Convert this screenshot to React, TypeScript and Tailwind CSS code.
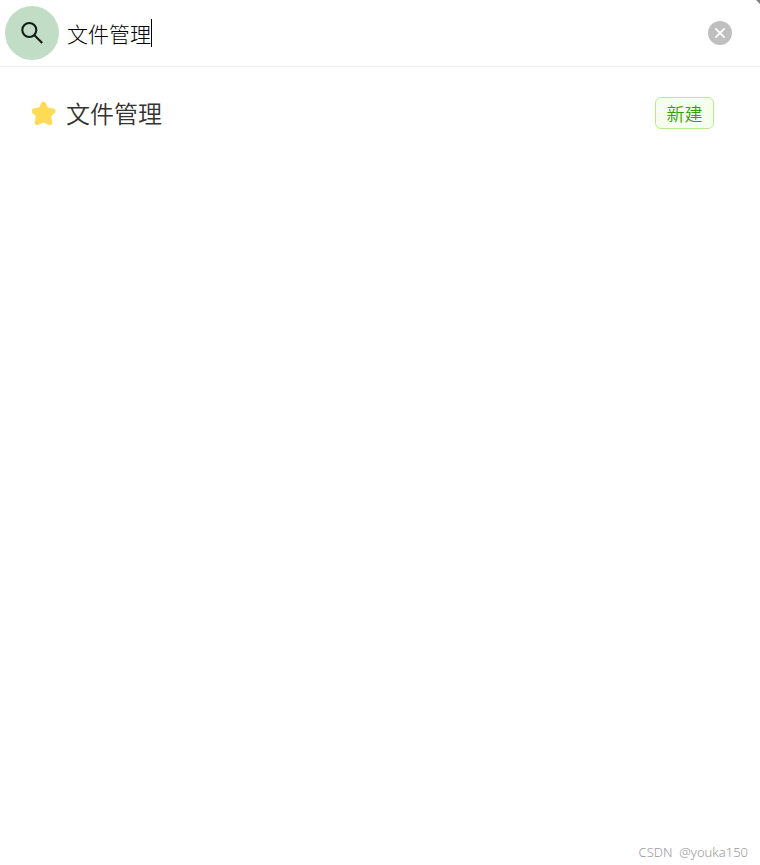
import { useState } from "react";

const sans = "font-['Noto_Sans_CJK_SC',sans-serif]";

function SearchIcon() {
  return (
    <svg viewBox="0 0 24 24" className="size-6" fill="none" stroke="#151c17" strokeWidth="2.1" aria-hidden="true">
      <circle cx="9.3" cy="9" r="7" />
      <path d="M14.2 13.9 22.2 21.9" />
    </svg>
  );
}

function StarIcon() {
  return (
    <svg viewBox="0 0 24 24" className="size-6 shrink-0" fill="#fddb55" stroke="#fddb55" strokeWidth="5" strokeLinejoin="round" aria-hidden="true">
      <path d="M11.5 3.2 14.2 8.8 21 10 16.6 14.6 17.8 21.6 11.5 18.8 5.2 21.6 6.4 14.6 2 10 8.8 8.8Z" />
    </svg>
  );
}

function ClearIcon() {
  return (
    <svg viewBox="0 0 24 24" className="size-6" aria-hidden="true">
      <circle cx="12" cy="12" r="12" fill="#bfbfbf" />
      <path d="M7.4 7.4 16.6 16.6M16.6 7.4 7.4 16.6" stroke="#fff" strokeWidth="1.9" />
    </svg>
  );
}

export default function App() {
  const [query, setQuery] = useState("文件管理");

  return (
    <div className={`relative flex min-h-screen flex-col bg-white text-[#333333] ${sans}`}>
      <header className="flex items-center border-b border-[#eeeeee] py-1.5 pr-7 pl-[5px]">
        <button type="button" aria-label="搜索" className="flex size-[54px] shrink-0 items-center justify-center rounded-full bg-[#c1ddc6]">
          <SearchIcon />
        </button>
        <label className="ml-2 flex min-w-0 flex-1 cursor-text items-center">
          <input
            type="text"
            aria-label="搜索内容"
            value={query}
            onChange={(e) => setQuery(e.target.value)}
            className="h-8 max-w-full bg-transparent text-[21px] font-light text-black caret-transparent outline-none [field-sizing:content]"
          />
          <span className="h-7 w-px shrink-0 bg-black" />
        </label>
        <button type="button" aria-label="清除" onClick={() => setQuery("")} className="shrink-0">
          <ClearIcon />
        </button>
      </header>

      <main className="flex-1 pt-6">
        <ul>
          <li className="flex h-11 items-center pr-[46px] pl-8">
            <StarIcon />
            <span className="ml-2.5 min-w-0 flex-1 text-2xl font-[350]">文件管理</span>
            <button type="button" className="flex h-8 w-[59px] shrink-0 items-center justify-center rounded-md border border-[#b7eb8f] bg-[#f6ffed] text-lg font-[350] text-[#389e0d]">
              新建
            </button>
          </li>
        </ul>
      </main>

      <footer className="flex justify-end pr-3 pb-[3px] font-['Noto_Sans',sans-serif] text-[13px] leading-5 font-light text-[#999999]">
        CSDN&nbsp; @youka150
      </footer>
      <span className="absolute top-0 right-0 size-1 bg-[#808080] [clip-path:polygon(0_0,100%_0,100%_100%)]" />
    </div>
  );
}
